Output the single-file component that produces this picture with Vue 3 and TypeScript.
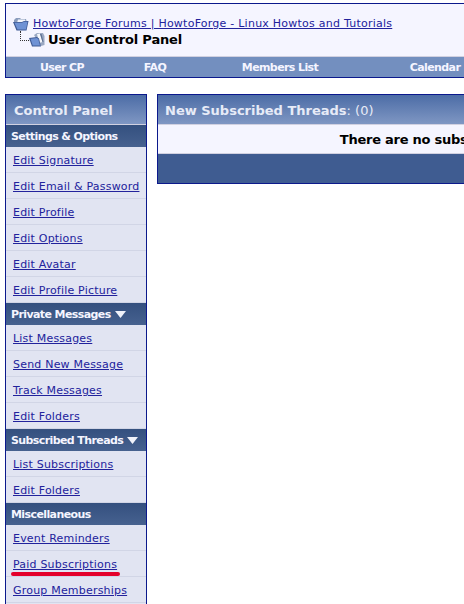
<script setup lang="ts">
interface MenuGroup {
  title: string;
  arrow: boolean;
  links: string[];
}

const navItems: string[] = ['User CP', 'FAQ', 'Members List', 'Calendar']

const groups: MenuGroup[] = [
  {
    title: 'Settings & Options',
    arrow: false,
    links: ['Edit Signature', 'Edit Email & Password', 'Edit Profile', 'Edit Options', 'Edit Avatar', 'Edit Profile Picture']
  },
  {
    title: 'Private Messages',
    arrow: true,
    links: ['List Messages', 'Send New Message', 'Track Messages', 'Edit Folders']
  },
  {
    title: 'Subscribed Threads',
    arrow: true,
    links: ['List Subscriptions', 'Edit Folders']
  },
  {
    title: 'Miscellaneous',
    arrow: false,
    links: ['Event Reminders', 'Paid Subscriptions', 'Group Memberships']
  }
]
</script>

<template>
  <div class="page">
    <div class="top-box">
      <div class="crumbs">
        <div class="crumb-line">
          <svg class="folder" width="16" height="14" viewBox="0 0 16 14">
            <path d="M1 6 L1 3 L3 1 L7 1 L8 2 L13 2 L14 6 Z" fill="#8a9cbc" />
            <path d="M4 6 L5 2.5 L12 2.5 L13 6 Z" fill="#f4f6fb" />
            <path d="M0 5 L9 5 L11 4 L15.5 4 L13.5 13.5 L3.5 13.5 Z" fill="#3f5a94" />
            <path d="M1.5 5.8 L9 5.8 L11 4.8 L14.5 4.8 L13 12.5 L4.5 12.5 Z" fill="#6f92d4" />
          </svg>
          <a href="#" class="crumb-link">HowtoForge Forums | HowtoForge - Linux Howtos and Tutorials</a>
        </div>
        <div class="crumb-current">
          <span class="tree"></span>
          <svg class="folder" width="16" height="15" viewBox="0 0 16 15">
            <path d="M5 3 L8 1 L14 1 L15.5 4 L15.5 13 L12 14 Z" fill="#9aa8c2" />
            <path d="M8 2 L11 1.5 L13.5 10 L10 11 Z" fill="#f4f6fb" />
            <path d="M11 2 L12.5 2 L14.5 10 L13.5 10 Z" fill="#5d6f92" />
            <path d="M0 6 L8 5 L10 6.5 L12 14.5 L3 14.5 Z" fill="#3f5a94" />
            <path d="M1.5 6.8 L8 6 L9.3 7.2 L11 13.5 L3.8 13.5 Z" fill="#6f92d4" />
          </svg>
          <strong>User Control Panel</strong>
        </div>
      </div>
      <div class="nav">
        <span v-for="item in navItems" :key="item" class="nav-item">{{ item }}</span>
      </div>
    </div>

    <div class="columns">
      <div class="sidebar">
        <div class="panel-head">Control Panel</div>
        <template v-for="group in groups" :key="group.title">
          <div class="group-title">
            {{ group.title }}
            <svg v-if="group.arrow" width="11" height="7" viewBox="0 0 11 7">
              <path d="M0 0 H11 L5.5 7 Z" fill="#f0f2fa" />
            </svg>
          </div>
          <div v-for="link in group.links" :key="link" class="menu-row">
            <a href="#" class="menu-link">{{ link }}</a>
          </div>
        </template>
        <div class="menu-row"></div>
        <span class="marker"></span>
      </div>

      <div class="content">
        <div class="panel-head content-head">New Subscribed Threads<span class="count">: (0)</span></div>
        <div class="message">There are no subscribed threads to display.</div>
        <div class="footer-bar"></div>
      </div>
    </div>
  </div>
</template>

<style>
html,
body {
  margin: 0;
  height: 100%;
  overflow: hidden;
  background: #fff;
}
</style>

<style scoped>
.page {
  width: 464px;
  height: 604px;
  overflow: hidden;
  padding: 3px 0 0 5px;
  box-sizing: border-box;
  font-family: "DejaVu Sans", Verdana, sans-serif;
  font-size: 11px;
  color: #000;
}

.top-box {
  width: 640px;
  height: 75px;
  border: 1px solid #0b198c;
  box-sizing: border-box;
  background: #f5f5ff;
  display: flex;
  flex-direction: column;
}

.crumbs {
  flex: 1;
  padding: 11px 0 0 8px;
  border-bottom: 1px solid #d1d1e1;
}

.crumb-line {
  display: flex;
  align-items: center;
  gap: 4px;
  height: 17px;
  margin-left: -1px;
}

.crumb-link {
  color: #22229c;
  font-size: 11px;
  letter-spacing: 0.24px;
}

.crumb-current {
  display: flex;
  align-items: center;
  height: 15px;
  padding-left: 6px;
  font-size: 13px;
  letter-spacing: -0.15px;
}

.crumb-current strong {
  margin-left: 3px;
}

.tree {
  width: 9px;
  height: 10px;
  margin-top: -8px;
  border-left: 1px dotted #333;
  border-bottom: 1px dotted #333;
  box-sizing: border-box;
}

.folder {
  flex: none;
}

.nav {
  height: 20px;
  background: #738fbf;
  display: grid;
  grid-template-columns: 112px 74px 176px 134px;
  align-items: center;
}

.nav-item {
  text-align: center;
  font-weight: bold;
  color: #f5f5ff;
  letter-spacing: -0.6px;
  padding-top: 1px;
}

.columns {
  display: flex;
  align-items: flex-start;
  gap: 10px;
  margin-top: 16px;
}

.sidebar {
  position: relative;
  flex: none;
  width: 142px;
  border: 1px solid #0b198c;
  box-sizing: border-box;
  background: #e1e4f2;
}

.panel-head {
  height: 30px;
  line-height: 32px;
  padding-left: 8px;
  box-sizing: border-box;
  background: linear-gradient(#4c6ca6, #7f97c3);
  border-bottom: 1px solid #d1d1e1;
  color: #e7ebf7;
  font-size: 13px;
  font-weight: bold;
}

.group-title {
  height: 22px;
  line-height: 24px;
  padding-left: 5px;
  box-sizing: border-box;
  background: linear-gradient(#34507f, #46618f);
  color: #f5f5ff;
  font-weight: bold;
  letter-spacing: -0.6px;
  white-space: nowrap;
}

.group-title svg {
  margin-left: 1px;
}

.menu-row {
  height: 26px;
  line-height: 27px;
  padding-left: 7px;
  box-sizing: border-box;
  border-bottom: 1px solid #d1d5e6;
  letter-spacing: 0.2px;
}

.menu-link {
  color: #22229c;
}

/* red underline painted over the screenshot */
.marker {
  position: absolute;
  left: 5px;
  top: 477px;
  width: 109px;
  height: 4px;
  border-radius: 2px;
  background: #e4002b;
}

.content {
  flex: none;
  width: 674px;
  border: 1px solid #0b198c;
  box-sizing: border-box;
}

.content-head {
  padding-left: 7px;
}

.count {
  font-weight: normal;
}

.message {
  height: 29px;
  line-height: 29px;
  box-sizing: border-box;
  text-align: center;
  font-size: 13px;
  font-weight: bold;
  letter-spacing: -0.25px;
  background: #f5f5ff;
  border-bottom: 1px solid #d1d1e1;
}

.footer-bar {
  height: 29px;
  background: #3f5c91;
}
</style>
